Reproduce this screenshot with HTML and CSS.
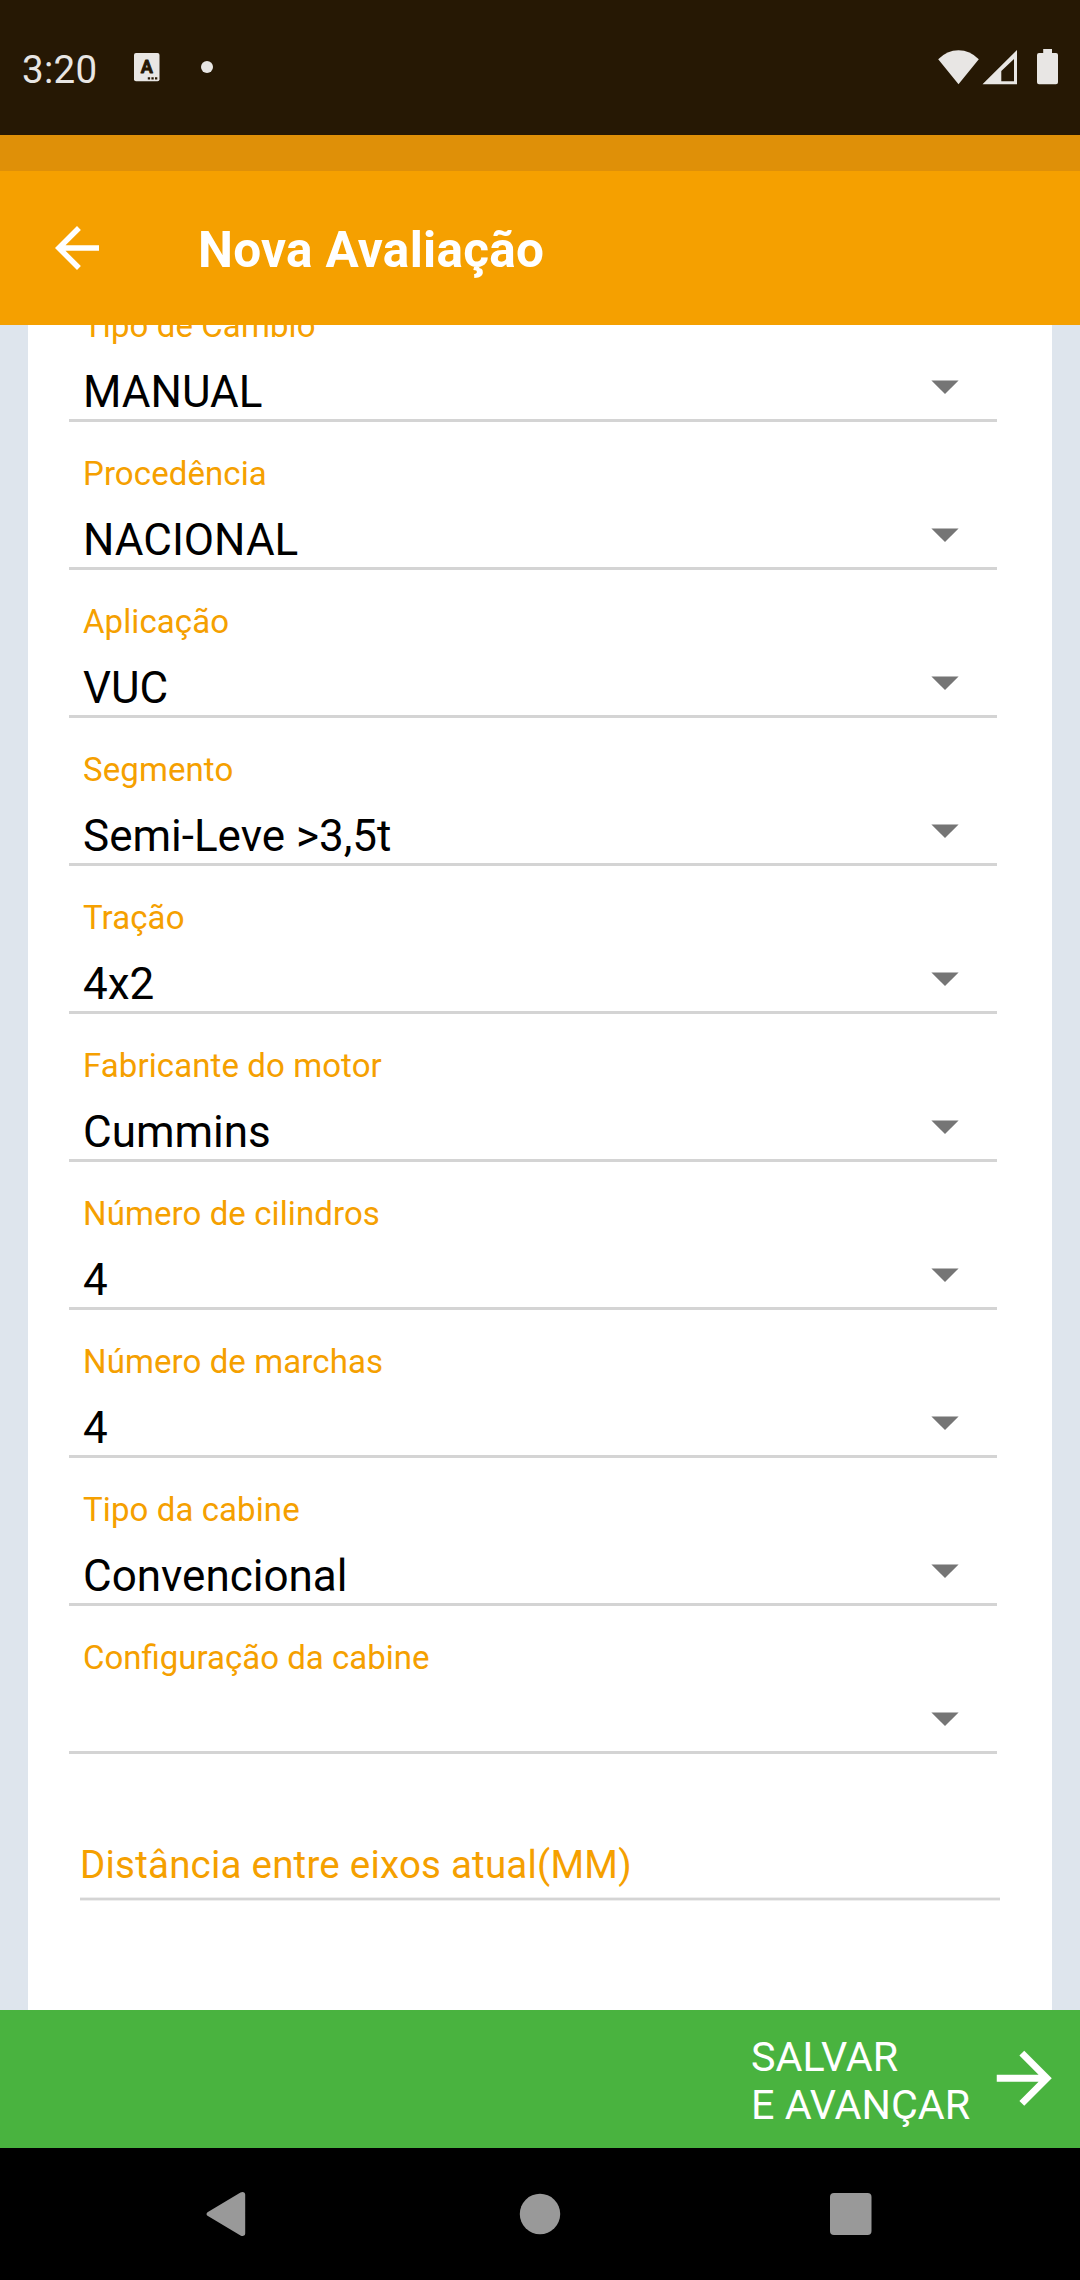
FILE: index.html
```html
<!DOCTYPE html>
<html lang="pt-BR">
<head>
<meta charset="utf-8">
<title>Nova Avaliação</title>
<link rel="stylesheet" href="styles.css">
</head>
<body>
<div class="screen">
  <div class="status-bar">
    <span class="clock">3:20</span>
    <svg class="keyboard-icon" width="26" height="29" viewBox="0 0 26 29"><rect width="25.5" height="28.2" rx="2"/><text class="keyboard-letter" x="12.9" y="20.3">A</text><path class="keyboard-dots" d="M13.8 24.2h2.3v2.3h-2.3zM17.4 24.2h2.3v2.3h-2.3zM21 24.2h2.3v2.3H21z"/></svg>
    <span class="more-dot"></span>
    <svg class="system-icons" width="122" height="36" viewBox="0 0 122 36"><path d="M.2 10.2Q9 1.2 20.5 1.2T40.8 10.2L20.5 35.2z"/><path fill-rule="evenodd" d="M44.5 35.2L79 1V35.2zM63.3 22V32.2H76V10z"/><path d="M105.2 0h8.8v4h4q2 0 2 2v27.300q0 2-2 2h-17q-2 0-2-2V6q0-2 2-2h4.200z"/></svg>
  </div>
  <div class="status-strip"></div>
  <header class="app-bar">
    <svg class="back-icon" width="66" height="66" viewBox="0 0 24 24"><path d="M20 11H7.830l5.590-5.590L12 4l-8 8 8 8 1.410-1.410L7.830 13H20v-2z"/></svg>
    <h1 class="title">Nova Avaliação</h1>
  </header>
  <main class="scroll">
    <form class="card">
      <div class="field"><span class="label">Tipo de Câmbio</span><div class="value">MANUAL<svg class="caret" width="28" height="14" viewBox="0 0 28 14"><path d="M.4.4h27.200L14 14z"/></svg></div></div>
      <div class="field"><span class="label">Procedência</span><div class="value">NACIONAL<svg class="caret" width="28" height="14" viewBox="0 0 28 14"><path d="M.4.4h27.200L14 14z"/></svg></div></div>
      <div class="field"><span class="label">Aplicação</span><div class="value">VUC<svg class="caret" width="28" height="14" viewBox="0 0 28 14"><path d="M.4.4h27.200L14 14z"/></svg></div></div>
      <div class="field"><span class="label">Segmento</span><div class="value">Semi-Leve &gt;3,5t<svg class="caret" width="28" height="14" viewBox="0 0 28 14"><path d="M.4.4h27.200L14 14z"/></svg></div></div>
      <div class="field"><span class="label">Tração</span><div class="value">4x2<svg class="caret" width="28" height="14" viewBox="0 0 28 14"><path d="M.4.4h27.200L14 14z"/></svg></div></div>
      <div class="field"><span class="label">Fabricante do motor</span><div class="value">Cummins<svg class="caret" width="28" height="14" viewBox="0 0 28 14"><path d="M.4.4h27.200L14 14z"/></svg></div></div>
      <div class="field"><span class="label">Número de cilindros</span><div class="value">4<svg class="caret" width="28" height="14" viewBox="0 0 28 14"><path d="M.4.4h27.200L14 14z"/></svg></div></div>
      <div class="field"><span class="label">Número de marchas</span><div class="value">4<svg class="caret" width="28" height="14" viewBox="0 0 28 14"><path d="M.4.4h27.200L14 14z"/></svg></div></div>
      <div class="field"><span class="label">Tipo da cabine</span><div class="value">Convencional<svg class="caret" width="28" height="14" viewBox="0 0 28 14"><path d="M.4.4h27.200L14 14z"/></svg></div></div>
      <div class="field"><span class="label label-ligature">Configuração da cabine</span><div class="value"><svg class="caret" width="28" height="14" viewBox="0 0 28 14"><path d="M.4.4h27.200L14 14z"/></svg></div></div>
      <div class="text-field">Distância entre eixos atual(MM)</div>
    </form>
  </main>
  <div class="save-bar">
    <span class="save-text">SALVAR<br>E AVANÇAR</span>
    <svg class="next-icon" width="82.5" height="82.5" viewBox="0 0 24 24"><path d="M12 4l-1.410 1.410L16.170 11H4v2h12.170l-5.580 5.590L12 20l8-8z"/></svg>
  </div>
  <nav class="nav-bar">
    <svg width="40" height="46" viewBox="0 0 40 46"><path d="M34.500 1.600Q36.500.4 38.200 1.400Q39.200 2.200 39.200 3.500V42.500Q39.200 43.800 38.200 44.600Q36.500 45.600 34.500 44.400L1.500 24.800Q-.5 23 1.500 21.200z"/></svg>
    <svg class="home-icon" width="42" height="42" viewBox="0 0 42 42"><circle cx="21" cy="21" r="20.200"/></svg>
    <svg width="42" height="42" viewBox="0 0 42 42"><rect width="41.500" height="42" rx="4"/></svg>
  </nav>
</div>
</body>
</html>
```
FILE: styles.css
```css
* { box-sizing: border-box; }

body {
  margin: 0;
  font-family: Roboto, "Liberation Sans", sans-serif;
  background: #000;
}

.screen {
  display: flex;
  flex-direction: column;
  width: 1080px;
  height: 2280px;
  overflow: hidden;
}

svg { display: block; flex: none; }

.status-bar {
  display: flex;
  align-items: flex-start;
  height: 135px;
  padding-left: 22px;
  padding-right: 20px;
  background: #261804;
  color: #e8e6e4;
  fill: #e8e6e4;
}

.clock {
  width: 111.500px;
  margin-top: 47px;
  font-size: 38.500px;
  letter-spacing: .3px;
  line-height: 46px;
}

.keyboard-icon { margin-top: 53px; }

.keyboard-letter {
  fill: #261804;
  stroke: #261804;
  stroke-width: .8px;
  stroke-linejoin: round;
  font-size: 18px;
  font-weight: 700;
  text-anchor: middle;
}

.keyboard-dots { fill: #261804; }

.more-dot {
  width: 12px;
  height: 12px;
  margin: 61px 0 0 41.500px;
  border-radius: 50%;
  background: #e8e6e4;
}

.system-icons { margin: 49px 0 0 auto; }

.status-strip { height: 36px; background: #df9008; }

.app-bar {
  display: flex;
  align-items: center;
  height: 154px;
  padding-left: 44px;
  background: #f5a000;
  color: #fff;
}

.back-icon { fill: #fff; }

.title {
  margin: 4px 0 0 88px;
  font-size: 49.500px;
  font-weight: 700;
  letter-spacing: .3px;
  line-height: 60px;
}

.scroll {
  height: 1685px;
  padding: 0 28px;
  overflow: hidden;
  background: #dee5ed;
}

.card {
  height: 1736px;
  margin-top: -51px;
  padding: 0 52px 0 41px;
  background: #fff;
}

.field {
  height: 148px;
  width: 928px;
  padding: 32px 38px 0 14px;
  border-bottom: 3px solid #d4d4d4;
}

.label {
  display: block;
  color: #f5a000;
  font-size: 33px;
  letter-spacing: .09px;
  line-height: 40px;
}

/* Letter spacing would split the "fi" ligature. */
.label-ligature { letter-spacing: normal; }

.value {
  display: flex;
  justify-content: space-between;
  height: 52px;
  margin-top: 20px;
  color: #000;
  font-size: 44px;
  line-height: 52px;
}

.caret {
  margin: 14px 0 0 auto;
  fill: #757575;
}

.text-field {
  width: 920px;
  height: 59px;
  margin: 88px 0 0 11px;
  color: #f5a000;
  font-size: 38.500px;
  letter-spacing: .22px;
  line-height: 46px;
  background: linear-gradient(#eee 1px, #d4d4d4 1px, #d4d4d4 3px, #eee 3px) bottom / 100% 4px no-repeat;
}

.save-bar {
  display: flex;
  justify-content: flex-end;
  height: 138px;
  padding: 22.600px 14.500px 0 0;
  background: #49b33f;
  color: #fff;
}

.save-text {
  width: 232px;
  font-size: 41.250px;
  line-height: 48.340px;
}

.next-icon { margin-top: 4.400px; fill: #fff; }

.nav-bar {
  display: flex;
  justify-content: space-between;
  align-items: center;
  height: 132px;
  padding: 0 208px 0 206px;
  background: #000;
  fill: #999;
}

.home-icon { margin-left: 4px; }
```
